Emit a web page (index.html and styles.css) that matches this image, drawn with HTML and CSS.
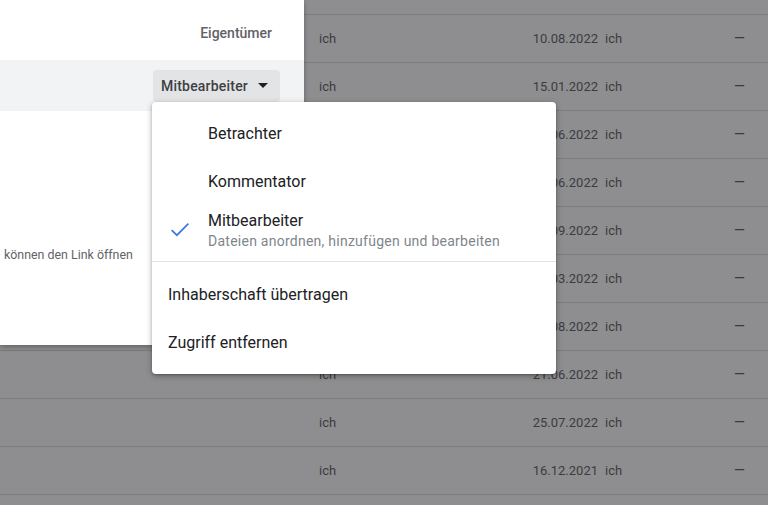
FILE: index.html
```html
<!DOCTYPE html>
<html lang="de">
<head>
<meta charset="utf-8">
<title>Freigabe</title>
<link rel="stylesheet" href="styles.css">
</head>
<body>
<div class="list">
  <div class="row top"></div>
  <div class="row"><span class="owner">ich</span><span class="date">10.08.2022</span><span class="by">ich</span><span class="size">–</span></div>
  <div class="row"><span class="owner">ich</span><span class="date">15.01.2022</span><span class="by">ich</span><span class="size">–</span></div>
  <div class="row"><span class="owner">ich</span><span class="date">14.06.2022</span><span class="by">ich</span><span class="size">–</span></div>
  <div class="row"><span class="owner">ich</span><span class="date">08.06.2022</span><span class="by">ich</span><span class="size">–</span></div>
  <div class="row"><span class="owner">ich</span><span class="date">19.09.2022</span><span class="by">ich</span><span class="size">–</span></div>
  <div class="row"><span class="owner">ich</span><span class="date">03.03.2022</span><span class="by">ich</span><span class="size">–</span></div>
  <div class="row"><span class="owner">ich</span><span class="date">18.08.2022</span><span class="by">ich</span><span class="size">–</span></div>
  <div class="row"><span class="owner">ich</span><span class="date">21.06.2022</span><span class="by">ich</span><span class="size">–</span></div>
  <div class="row"><span class="owner">ich</span><span class="date">25.07.2022</span><span class="by">ich</span><span class="size">–</span></div>
  <div class="row"><span class="owner">ich</span><span class="date">16.12.2021</span><span class="by">ich</span><span class="size">–</span></div>
  <div class="row last"></div>
</div>

<div class="dialog">
  <div class="person-row">
    <span class="role-static">Eigentümer</span>
  </div>
  <div class="person-row active">
    <button class="role-btn">Mitbearbeiter
      <svg class="caret" width="10" height="5" viewBox="0 0 10 5"><path d="M0 0h10L5 5z" fill="#202124"/></svg>
    </button>
  </div>
  <div class="link-info">können den Link öffnen</div>
</div>

<div class="menu">
  <div class="item indent">Betrachter</div>
  <div class="item indent">Kommentator</div>
  <div class="item two-line">
    <svg class="check" width="24" height="24" viewBox="0 0 24 24"><path d="M3.6 13.1l5.3 5.1L20.4 6.6" fill="none" stroke="#3b78e7" stroke-width="1.7"/></svg>
    <div class="texts">
      <div class="title">Mitbearbeiter</div>
      <div class="sub">Dateien anordnen, hinzufügen und bearbeiten</div>
    </div>
  </div>
  <div class="divider"></div>
  <div class="item">Inhaberschaft übertragen</div>
  <div class="item">Zugriff entfernen</div>
</div>
</body>
</html>
```

FILE: styles.css
```css
html, body {
  margin: 0;
  padding: 0;
}
body {
  width: 768px;
  height: 505px;
  overflow: hidden;
  background: #8e8e90;
  font-family: Roboto, "Liberation Sans", sans-serif;
  position: relative;
}

.list {
  display: flex;
  flex-direction: column;
}
.row {
  height: 47px;
  border-bottom: 1px solid #7c7c7e;
  display: flex;
  align-items: center;
  padding-left: 319px;
  font-size: 13px;
  color: #3c3c3e;
  flex-shrink: 0;
}
.row.top {
  height: 14px;
}
.row.last {
  height: 10px;
  border-bottom: 0;
}
.owner {
  width: 200px;
}
.date {
  width: 79px;
  text-align: right;
}
.by {
  margin-left: 7px;
  width: 100px;
}
.size {
  margin-left: 29px;
  font-size: 17px;
  line-height: 13px;
  transform: scaleX(1.1);
}

.dialog {
  position: absolute;
  left: 0;
  top: 0;
  width: 304px;
  height: 345px;
  background: #fff;
  box-shadow: 0 2px 5px rgba(0, 0, 0, 0.3);
}
.person-row {
  display: flex;
  justify-content: flex-end;
  align-items: center;
  height: 48px;
  margin-top: 9px;
  padding-right: 32px;
}
.person-row.active {
  height: 51px;
  margin-top: 3px;
  background: #f1f3f4;
  padding-right: 24px;
}
.role-static {
  font-size: 14px;
  font-weight: 500;
  color: #5f6368;
}
.role-btn {
  display: flex;
  align-items: center;
  height: 32px;
  margin-top: 0;
  padding: 0 12px 0 8px;
  border: 0;
  border-radius: 4px;
  background: #e3e4e6;
  font-family: Roboto, "Liberation Sans", sans-serif;
  font-size: 14px;
  font-weight: 500;
  letter-spacing: 0.2px;
  color: #3c4043;
  gap: 10px;
}
.caret {
  display: block;
}
.link-info {
  margin-top: 136px;
  padding-left: 4px;
  font-size: 12.4px;
  color: #5f6368;
}

.menu {
  position: absolute;
  left: 152px;
  top: 102px;
  width: 404px;
  padding: 7px 0 8px;
  background: #fff;
  border-radius: 4px;
  box-shadow: 0 2px 6px rgba(0, 0, 0, 0.3), 0 1px 2px rgba(0, 0, 0, 0.2);
}
.item {
  height: 48px;
  display: flex;
  align-items: center;
  padding-left: 16px;
  font-size: 16px;
  color: #202124;
}
.item.indent {
  padding-left: 56px;
}
.item.two-line {
  height: 56px;
  align-items: flex-start;
  padding-top: 6px;
  box-sizing: border-box;
}
.check {
  margin-top: 6px;
  margin-right: 16px;
  flex-shrink: 0;
}
.title {
  line-height: 20px;
}
.sub {
  font-size: 14px;
  line-height: 21px;
  letter-spacing: 0.25px;
  color: #80868b;
}
.divider {
  height: 1px;
  background: #e2e3e5;
  margin-bottom: 8px;
}
```
